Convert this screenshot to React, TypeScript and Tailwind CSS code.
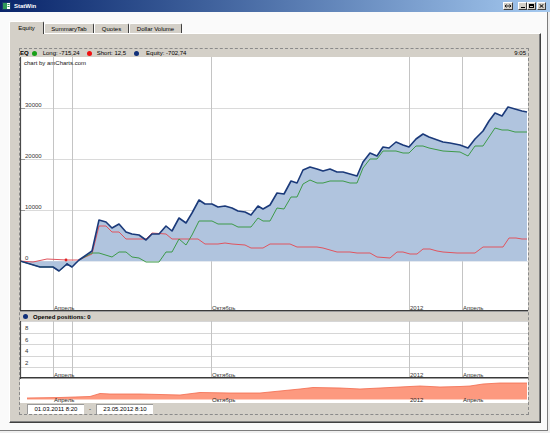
import React from "react";

type P = [number, number];

const navy: P[] = [
  [20, 261], [40, 267], [53, 267], [59, 271], [67, 264], [72, 267], [79, 260], [92, 251], [99, 220], [106, 222],
  [112, 228], [119, 224], [126, 232], [132, 234], [139, 235], [146, 240], [152, 234], [159, 234], [166, 226],
  [172, 231], [179, 218], [186, 223], [192, 213], [199, 200], [205, 204], [212, 204], [218, 207], [225, 206],
  [232, 208], [238, 211], [245, 212], [251, 215], [258, 206], [263, 209], [270, 205], [277, 193], [284, 194],
  [291, 181], [297, 183], [303, 170], [310, 167], [317, 169], [323, 171], [330, 169], [337, 172], [343, 172],
  [350, 174], [357, 176], [363, 162], [370, 153], [377, 156], [383, 147], [389, 148], [396, 142], [403, 145],
  [409, 147], [416, 139], [423, 134], [429, 137], [443, 142], [450, 143], [460, 145], [468, 148], [475, 139],
  [483, 131], [489, 121], [495, 113], [502, 116], [508, 107], [515, 109], [522, 111], [527, 112],
];

const green: P[] = [
  [20, 261], [40, 267], [53, 267], [59, 271], [67, 264], [72, 267], [79, 260], [92, 253], [99, 253], [112, 257],
  [119, 252], [126, 252], [132, 257], [139, 258], [146, 262], [159, 262], [166, 252], [172, 252], [179, 239],
  [186, 245], [192, 235], [199, 221], [212, 221], [218, 224], [232, 224], [238, 227], [251, 227], [258, 218],
  [263, 221], [270, 221], [277, 208], [284, 209], [291, 197], [297, 197], [303, 184], [310, 180], [317, 183],
  [323, 183], [330, 181], [343, 181], [350, 183], [357, 183], [363, 168], [370, 159], [377, 159], [383, 151],
  [396, 151], [403, 153], [409, 153], [416, 146], [423, 146], [429, 148], [443, 151], [460, 152], [468, 156],
  [475, 146], [483, 146], [495, 128], [502, 130], [508, 130], [515, 132], [527, 132],
];

const red: P[] = [
  [20, 261], [33, 262], [47, 259], [67, 260], [79, 260], [92, 254], [99, 226], [106, 226], [112, 232], [119, 232],
  [126, 239], [146, 239], [152, 233], [166, 234], [172, 239], [198, 239], [205, 244], [218, 244], [225, 243],
  [232, 244], [245, 245], [251, 248], [263, 248], [270, 244], [290, 244], [297, 247], [317, 247], [323, 248],
  [330, 250], [337, 252], [350, 252], [357, 253], [370, 253], [377, 257], [390, 258], [397, 252], [403, 252],
  [410, 254], [417, 254], [423, 249], [430, 249], [437, 251], [443, 252], [457, 253], [475, 253], [483, 247],
  [503, 247], [509, 238], [516, 238], [522, 239], [527, 239],
];

const over: P[] = [
  [27, 398], [60, 397.5], [90, 396.5], [100, 393.5], [110, 394], [140, 394], [180, 395], [200, 392.5], [230, 393],
  [260, 393], [280, 391], [300, 389], [313, 387.5], [340, 388], [360, 389], [380, 388], [400, 387], [420, 386],
  [440, 387], [460, 386.5], [470, 386], [483, 384], [500, 383], [510, 383], [527, 383],
];

const pts = (a: P[]) => a.map((p) => p.join(",")).join(" ");

const VX = [53.5, 72.5, 211.5, 409.5, 462.5];
const XL = [
  { x: 54, t: "Апрель" },
  { x: 212, t: "Октябрь" },
  { x: 410, t: "2012" },
  { x: 463, t: "Апрель" },
];

function TitleBar() {
  return (
    <div className="h-[12px] flex items-center bg-gradient-to-r from-[#0a246a] to-[#a6caf0] shrink-0">
      <svg width="9" height="8" viewBox="0 0 9 8" className="ml-[2px] shrink-0">
        <rect x="0.5" y="0.5" width="8" height="7" fill="#ffffff" stroke="#1a3a6a" />
        <rect x="1" y="1" width="4" height="6" fill="#2f9a5a" />
        <rect x="5.5" y="2" width="2" height="1" fill="#2f9a5a" />
        <rect x="5.5" y="4" width="2" height="1" fill="#2f9a5a" />
      </svg>
      <span className="ml-[3px] text-[6px] font-bold text-white leading-none">StatWin</span>
      <div className="ml-auto flex items-center mr-[4px]">
        <div className="w-[10px] h-[8px] bg-[#d4d0c8] border-t border-l border-white border-r border-b border-r-[#404040] border-b-[#404040] flex items-center justify-center">
          <svg width="6" height="4" viewBox="0 0 6 4">
            <path d="M0 2h6M0 2l1.5-1.5M0 2l1.5 1.5M6 2l-1.5-1.5M6 2l-1.5 1.5" stroke="#000" strokeWidth="0.8" fill="none" />
          </svg>
        </div>
        <div className="ml-[5px] w-[9px] h-[8px] bg-[#d4d0c8] border-t border-l border-white border-r border-b border-r-[#404040] border-b-[#404040] flex items-end justify-center pb-[1px]">
          <div className="w-[4px] h-[1px] bg-black" />
        </div>
        <div className="w-[9px] h-[8px] bg-[#d4d0c8] border-t border-l border-white border-r border-b border-r-[#404040] border-b-[#404040] flex items-center justify-center">
          <div className="w-[5px] h-[4px] border border-black border-t-2" />
        </div>
        <div className="ml-[1px] w-[9px] h-[8px] bg-[#d4d0c8] border-t border-l border-white border-r border-b border-r-[#404040] border-b-[#404040] flex items-center justify-center">
          <svg width="5" height="4" viewBox="0 0 5 4">
            <path d="M0.5 0.2L4.5 3.8M4.5 0.2L0.5 3.8" stroke="#000" strokeWidth="1" />
          </svg>
        </div>
      </div>
    </div>
  );
}

function Tabs() {
  const tabs = [
    { t: "Equity", w: "w-[35px]", sel: true },
    { t: "SummaryTab", w: "w-[50px]", sel: false },
    { t: "Quotes", w: "w-[35px]", sel: false },
    { t: "Dollar Volume", w: "w-[53px]", sel: false },
  ];
  return (
    <div className="h-[12px] flex items-end shrink-0">
      {tabs.map((tb) =>
        tb.sel ? (
          <div
            key={tb.t}
            className={`${tb.w} h-[13px] -mb-[1px] relative z-10 bg-[#d4d0c8] border-l border-t border-white border-r border-r-[#404040] rounded-t-[2px] flex items-center justify-center text-[6px] text-black leading-none pb-[1px]`}
          >
            {tb.t}
          </div>
        ) : (
          <div
            key={tb.t}
            className={`${tb.w} h-[10px] bg-[#d4d0c8] border-l border-t border-white border-r border-r-[#404040] rounded-t-[2px] flex items-center justify-center text-[6px] text-black leading-none`}
          >
            {tb.t}
          </div>
        )
      )}
    </div>
  );
}

function MainChart() {
  return (
    <svg width={508} height={255} viewBox="20 57 508 255" className="block shrink-0">
      <rect x={20} y={57} width={508} height={255} fill="#ffffff" />
      {[108, 159, 210].map((y) => (
        <line key={y} x1={20} x2={528} y1={y + 0.5} y2={y + 0.5} stroke="#dadada" strokeWidth={1} />
      ))}
      {[108, 159, 210, 261].map((y) => (
        <line key={"t" + y} x1={20} x2={25} y1={y + 0.5} y2={y + 0.5} stroke="#9a9a9a" strokeWidth={1} />
      ))}
      {VX.map((x) => (
        <line key={x} x1={x} x2={x} y1={57} y2={311} stroke="#c4c4c4" strokeWidth={1} />
      ))}
      <polygon points={pts([...navy, [527, 261], [20, 261]])} fill="#b0c4de" />
      <line x1={20} x2={528} y1={261.5} y2={261.5} stroke="#c8d2e0" strokeWidth={0.5} />
      <polyline points={pts(red)} fill="none" stroke="#e0545e" strokeWidth={1} strokeLinejoin="round" />
      <polyline points={pts(green)} fill="none" stroke="#3d9a48" strokeWidth={1} strokeLinejoin="round" />
      <polyline points={pts(navy)} fill="none" stroke="#1b3a7a" strokeWidth={1.6} strokeLinejoin="round" />
      <circle cx={66} cy={260} r={1.4} fill="#e02020" />
      <circle cx={67} cy={264.5} r={1.2} fill="#1b3a7a" />
      <text x={24} y={64.5} fontSize={6} fill="#111">chart by amCharts.com</text>
      <text x={25} y={107} fontSize={6} fill="#333">30000</text>
      <text x={25} y={158} fontSize={6} fill="#333">20000</text>
      <text x={25} y={209} fontSize={6} fill="#333">10000</text>
      <text x={25} y={259.5} fontSize={6} fill="#333">0</text>
      {XL.map((l) => (
        <text key={l.x} x={l.x} y={309.5} fontSize={6} fill="#333">
          {l.t}
        </text>
      ))}
      <line x1={20.5} x2={20.5} y1={57} y2={311} stroke="#4a4a4a" strokeWidth={1.2} />
      <line x1={20} x2={528} y1={310.7} y2={310.7} stroke="#3a3a3a" strokeWidth={1.5} />
    </svg>
  );
}

function PosChart() {
  return (
    <svg width={508} height={58} viewBox="20 321 508 58" className="block shrink-0">
      <rect x={20} y={321} width={508} height={58} fill="#ffffff" />
      {[321.5, 333.5, 344.5, 356.5, 367.5].map((y) => (
        <line key={y} x1={20} x2={528} y1={y} y2={y} stroke="#d6d6d6" strokeWidth={1} />
      ))}
      {VX.map((x) => (
        <line key={x} x1={x} x2={x} y1={321} y2={378} stroke="#c4c4c4" strokeWidth={1} />
      ))}
      <text x={25} y={330} fontSize={6} fill="#333">8</text>
      <text x={25} y={342} fontSize={6} fill="#333">6</text>
      <text x={25} y={353} fontSize={6} fill="#333">4</text>
      <text x={25} y={365} fontSize={6} fill="#333">2</text>
      {XL.map((l) => (
        <text key={l.x} x={l.x} y={376.5} fontSize={6} fill="#333">
          {l.t}
        </text>
      ))}
      <line x1={20.5} x2={20.5} y1={321} y2={379} stroke="#4a4a4a" strokeWidth={1.2} />
      <line x1={20} x2={528} y1={377.8} y2={377.8} stroke="#3a3a3a" strokeWidth={1.5} />
    </svg>
  );
}

function Overview() {
  return (
    <svg width={508} height={24} viewBox="20 379 508 24" className="block shrink-0">
      <rect x={20} y={379} width={508} height={24} fill="#ffffff" />
      <polygon points={pts([...over, [527, 399.5], [27, 399.5]])} fill="#fd997f" />
      <polyline points={pts(over)} fill="none" stroke="#f26a4c" strokeWidth={0.8} />
      {XL.map((l) => (
        <text key={l.x} x={l.x} y={402} fontSize={6} fill="#222">
          {l.t}
        </text>
      ))}
    </svg>
  );
}

function Dot({ c }: { c: string }) {
  return <div className={`w-[5px] h-[5px] rounded-full shrink-0 ${c}`} />;
}

export default function App() {
  return (
    <div className="w-[550px] h-[433px] bg-[#efefef] flex flex-col overflow-hidden font-['Liberation_Sans',Arial,sans-serif] text-black">
      <TitleBar />
      <div className="flex-1 flex flex-col mr-[2px] mb-[2px] bg-[#fafafa] border-r border-b border-[#7c7c7c] pl-[9px] pr-[6px] pt-[9px] pb-[7px] min-h-0">
        <Tabs />
        <div className="flex-1 flex flex-col bg-[#d4d0c8] border-l border-t border-white border-r border-b border-r-[#404040] border-b-[#404040] shadow-[inset_-1px_-1px_0_#808080] pl-[9px] pr-[11px] pt-[14px] pb-[7px] min-h-0">
          <div className="flex flex-col border border-dashed border-[#8a8a8a]">
            <div className="h-[8px] flex items-center text-[6px] leading-none">
              <span className="font-bold">EQ</span>
              <div className="ml-[3px]">
                <Dot c="bg-[#18a018]" />
              </div>
              <span className="ml-[6px]">Long: -715,24</span>
              <div className="ml-[7px]">
                <Dot c="bg-[#f01010]" />
              </div>
              <span className="ml-[5px]">Short: 12,5</span>
              <div className="ml-[8px]">
                <Dot c="bg-[#10307a]" />
              </div>
              <span className="ml-[7px]">Equity: -702,74</span>
              <span className="ml-auto mr-[2px]">9:05</span>
            </div>
            <MainChart />
            <div className="h-[9px] flex items-center text-[6px] leading-none shrink-0">
              <div className="ml-[3px]">
                <Dot c="bg-[#10307a]" />
              </div>
              <span className="ml-[5px] font-bold">Opened positions: 0</span>
            </div>
            <PosChart />
            <Overview />
            <div className="h-[11px] flex items-center text-[6px] leading-none shrink-0">
              <div className="ml-[7px] w-[57px] h-[10px] bg-white border-t border-l border-[#9a9a9a] flex items-center justify-center">
                01.03.2011 8:20
              </div>
              <span className="ml-[3px] w-[6px] text-center">-</span>
              <div className="ml-[3px] w-[57px] h-[10px] bg-white border-t border-l border-[#9a9a9a] flex items-center justify-center">
                23.05.2012 8:10
              </div>
            </div>
          </div>
        </div>
      </div>
    </div>
  );
}
